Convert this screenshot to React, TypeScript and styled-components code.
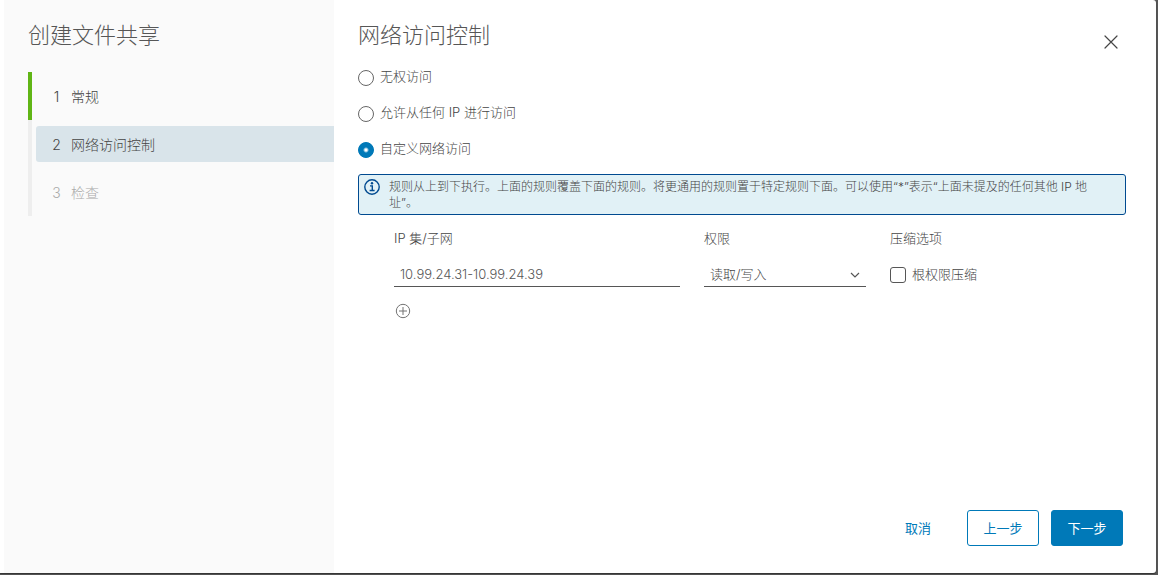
import React, { useState } from 'react';
import styled, { createGlobalStyle } from 'styled-components';

const Global = createGlobalStyle`
  *, *::before, *::after { box-sizing: border-box; }
  body {
    margin: 0;
    background: #565656;
    color: #454545;
    font-family: Inter, "Noto Sans CJK SC", sans-serif;
    font-size: 13px;
    font-weight: 300;
    line-height: 24px;
  }
  button, input, select { font: inherit; color: inherit; margin: 0; }
`;

const Backdrop = styled.div`
  display: flex;
  min-height: 100vh;
  padding: 0 2px 2px 0;
`;

const Dialog = styled.div`
  display: flex;
  flex: 1;
  min-width: 0;
  padding-left: 4px;
  background: #ffffff;
  border-radius: 0 3px 3px 0;
  box-shadow: 0 1px 1px #333333;
`;

const Sidebar = styled.nav`
  flex: 0 0 330px;
  padding: 24px 0 24px 24px;
  background: #fafafa;
`;

const Title = styled.h1`
  margin: 0;
  color: #565656;
  font-size: 22px;
  font-weight: 300;
  line-height: 22px;
`;

const Steps = styled.ol`
  margin: 26px 0 0;
  padding: 0;
  list-style: none;
`;

type StepState = 'done' | 'current' | 'pending';

const Step = styled.li<{ $state: StepState }>`
  display: flex;
  align-items: center;
  height: 48px;
  padding-left: 4px;
  border-left: 4px solid ${p => (p.$state === 'done' ? '#60b515' : '#eeeeee')};
`;

const StepButton = styled.button<{ $state: StepState }>`
  display: flex;
  align-items: center;
  gap: 8px;
  width: 100%;
  height: 36px;
  padding: 2px 0 0 14px;
  border: 0;
  border-radius: 3px 0 0 3px;
  background: ${p => (p.$state === 'current' ? '#d9e4ea' : 'transparent')};
  color: ${p => (p.$state === 'pending' ? '#aaaaaa' : '#454545')};
  font-size: 14px;
  text-align: left;
`;

const StepNumber = styled.span`
  width: 13px;
  text-align: center;
`;

const Main = styled.main`
  display: flex;
  flex: 1;
  flex-direction: column;
  min-width: 0;
  padding: 24px 30px 27px 24px;
`;

const Header = styled.header`
  display: flex;
  justify-content: space-between;
  height: 36px;
`;

const CloseButton = styled.button`
  display: flex;
  align-items: center;
  justify-content: center;
  width: 30px;
  height: 36px;
  padding: 0;
  border: 0;
  background: none;
`;

const RadioGroup = styled.div`
  display: flex;
  flex-direction: column;
  margin-bottom: 6px;
`;

const Choice = styled.label`
  display: flex;
  align-items: flex-start;
  gap: 6px;
  height: 36px;
  padding-top: 4px;

  input { margin-top: 6px; }
`;

const Radio = styled.input`
  appearance: none;
  width: 16px;
  height: 16px;
  border: 1px solid #666666;
  border-radius: 50%;
  background: #ffffff;

  &:checked {
    border-color: #0079b8;
    background: #0079b8 radial-gradient(circle, #ffffff 0 1px, #0079b8 3px);
  }
`;

const Notice = styled.div`
  display: flex;
  gap: 9px;
  padding: 4px 18px 3px 5px;
  border: 1px solid #004a90;
  border-radius: 3px;
  background: #e1f1f6;
  font-size: 12px;
  line-height: 16px;

  svg { flex: none; }
  p { margin: 0; }
`;

const Rule = styled.div`
  display: grid;
  grid-template-columns: 286fr 162fr 236fr;
  gap: 24px;
  margin-top: 11px;
  padding-left: 36px;
`;

const Field = styled.div`
  display: flex;
  flex-direction: column;
  gap: 12px;
  min-width: 0;
`;

const TextInput = styled.input`
  width: 100%;
  height: 25px;
  padding: 0 6px 1px;
  border: 0;
  border-bottom: 1px solid #565656;
  background: none;
  color: #565656;
`;

const SelectBox = styled.div`
  display: grid;
  align-items: center;

  > * { grid-area: 1 / 1; }
  svg { justify-self: end; margin-right: 6px; pointer-events: none; }
`;

const Select = styled.select`
  appearance: none;
  width: 100%;
  height: 25px;
  padding: 0 24px 1px 6px;
  border: 0;
  border-bottom: 1px solid #565656;
  border-radius: 0;
  background: none;
`;

const CheckLabel = styled.label`
  display: flex;
  align-items: flex-start;
  gap: 6px;
  height: 25px;

  input { margin-top: 5px; }
`;

const Checkbox = styled.input`
  appearance: none;
  width: 16px;
  height: 16px;
  border: 1px solid #565656;
  border-radius: 3px;
  background: #ffffff;

  &:checked { background: #0079b8; }
`;

const AddButton = styled.button`
  display: flex;
  align-self: flex-start;
  margin: 16px 0 0 37px;
  padding: 0;
  border: 0;
  background: none;
`;

const Footer = styled.footer`
  display: flex;
  justify-content: flex-end;
  gap: 12px;
  margin-top: auto;
  padding-right: 3px;
`;

const Button = styled.button<{ $kind: 'link' | 'outline' | 'primary' }>`
  min-width: ${p => (p.$kind === 'link' ? '0' : '72px')};
  height: 36px;
  margin-right: ${p => (p.$kind === 'link' ? '11px' : '0')};
  padding: 0 12px;
  border: 1px solid ${p => (p.$kind === 'link' ? 'transparent' : '#0079b8')};
  border-radius: 3px;
  background: ${p => (p.$kind === 'primary' ? '#0079b8' : 'transparent')};
  color: ${p => (p.$kind === 'primary' ? '#ffffff' : '#0079b8')};
  font-weight: 400;
`;

const steps: { label: string; state: StepState }[] = [
  { label: '常规', state: 'done' },
  { label: '网络访问控制', state: 'current' },
  { label: '检查', state: 'pending' },
];

const accessModes = ['无权访问', '允许从任何 IP 进行访问', '自定义网络访问'];

export default function App() {
  const [mode, setMode] = useState(2);
  const [ip, setIp] = useState('10.99.24.31-10.99.24.39');

  return (
    <Backdrop>
      <Global />
      <Dialog role="dialog" aria-labelledby="wizard-title">
        <Sidebar>
          <Title id="wizard-title">创建文件共享</Title>
          <Steps>
            {steps.map((s, i) => (
              <Step key={s.label} $state={s.state}>
                <StepButton $state={s.state} disabled={s.state === 'pending'}>
                  <StepNumber>{i + 1}</StepNumber>
                  {s.label}
                </StepButton>
              </Step>
            ))}
          </Steps>
        </Sidebar>

        <Main>
          <Header>
            <Title as="h2">网络访问控制</Title>
            <CloseButton aria-label="关闭">
              <svg width="14" height="14" viewBox="0 0 14 14" fill="none" stroke="#454545" strokeWidth="1.2" strokeLinecap="round">
                <path d="M1 1l12 12M13 1L1 13" />
              </svg>
            </CloseButton>
          </Header>

          <RadioGroup role="radiogroup">
            {accessModes.map((label, i) => (
              <Choice key={label}>
                <Radio type="radio" name="access" checked={mode === i} onChange={() => setMode(i)} />
                {label}
              </Choice>
            ))}
          </RadioGroup>

          <Notice>
            <svg width="16" height="16" viewBox="0 0 16 16" fill="none" stroke="#004a90">
              <circle cx="8" cy="8" r="7.2" strokeWidth="1.4" />
              <path d="M6 6.9h2.3v4.5M5.6 11.5h5" strokeWidth="1.4" />
              <circle cx="8" cy="4.3" r="1.2" fill="#004a90" stroke="none" />
            </svg>
            <p>
              规则从上到下执行。上面的规则覆盖下面的规则。将更通用的规则置于特定规则下面。可以使用“*”表示“上面未提及的任何其他 IP 地址”。
            </p>
          </Notice>

          <Rule>
            <Field>
              <label htmlFor="ip">IP 集/子网</label>
              <TextInput id="ip" value={ip} onChange={e => setIp(e.target.value)} />
            </Field>
            <Field>
              <label htmlFor="permission">权限</label>
              <SelectBox>
                <Select id="permission">
                  <option>读取/写入</option>
                </Select>
                <svg width="10" height="6" viewBox="0 0 10 6" fill="none" stroke="#565656" strokeWidth="1.2">
                  <path d="M1 1l4 4 4-4" />
                </svg>
              </SelectBox>
            </Field>
            <Field>
              <span>压缩选项</span>
              <CheckLabel>
                <Checkbox type="checkbox" />
                根权限压缩
              </CheckLabel>
            </Field>
          </Rule>

          <AddButton aria-label="添加">
            <svg width="16" height="16" viewBox="0 0 16 16" fill="none" stroke="#737373">
              <circle cx="8" cy="8" r="6.7" />
              <path d="M8 4v8M4 8h8" />
            </svg>
          </AddButton>

          <Footer>
            <Button $kind="link">取消</Button>
            <Button $kind="outline">上一步</Button>
            <Button $kind="primary">下一步</Button>
          </Footer>
        </Main>
      </Dialog>
    </Backdrop>
  );
}
